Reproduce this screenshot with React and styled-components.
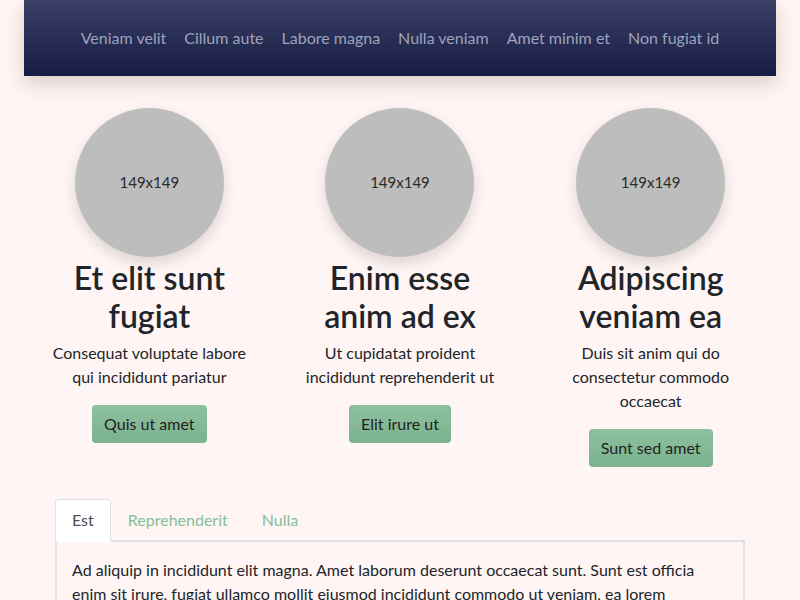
import React from "react";
import styled, { createGlobalStyle } from "styled-components";

const GlobalStyle = createGlobalStyle`
  body {
    margin: 0;
    background: #fff5f4;
    font-family: Lato, "Noto Sans", sans-serif;
    color: #212529;
    font-size: 16px;
    line-height: 1.5;
  }
`;

const Page = styled.div`
  display: flex;
  flex-direction: column;
  align-items: center;
`;

const NavBar = styled.nav`
  width: 752px;
  height: 76px;
  display: flex;
  justify-content: center;
  align-items: center;
  background: linear-gradient(180deg, #3b4066 0%, #171c45 100%);
  box-shadow: 0 8px 18px rgba(60, 30, 20, 0.18);
`;

const NavLink = styled.a`
  padding: 0 9px;
  color: #9ea2bc;
  text-decoration: none;
  font-size: 16px;
`;

const FeatureRow = styled.div`
  width: 752px;
  display: grid;
  grid-template-columns: repeat(3, 1fr);
  margin-top: 32px;
`;

const Feature = styled.div`
  padding: 0 20px;
  display: flex;
  flex-direction: column;
  align-items: center;
  text-align: center;
`;

const Avatar = styled.div`
  width: 149px;
  height: 149px;
  flex-shrink: 0;
  border-radius: 50%;
  background: #bdbdbd;
  box-shadow: 0 6px 14px rgba(0, 0, 0, 0.14);
  display: flex;
  align-items: center;
  justify-content: center;
  font-size: 15px;
  color: #2a2a2a;
  margin-bottom: 2px;
`;

const Title = styled.h2`
  margin: 0 0 5px;
  font-size: 32px;
  font-weight: 600;
  line-height: 1.2;
  color: #212529;
`;

const Text = styled.p`
  margin: 0 0 16px;
  font-size: 16px;
  line-height: 24px;
`;

const GreenButton = styled.button`
  font-family: inherit;
  font-size: 16px;
  line-height: 24px;
  padding: 7px 12px;
  border: none;
  border-radius: 4px;
  color: #222;
  background: linear-gradient(180deg, #8fc09f 0%, #7ab38e 100%);
  cursor: pointer;
`;

const TabsWrap = styled.div`
  width: 690px;
  margin-top: 32px;
`;

const TabList = styled.div`
  display: flex;
  border-bottom: 2px solid #dee2e6;
`;

const Tab = styled.button`
  font-family: inherit;
  font-size: 16px;
  line-height: 24px;
  padding: 8px 16px;
  margin-bottom: -2px;
  border: 1px solid ${(p) => (p.$active ? "#dee2e6" : "transparent")};
  border-bottom: ${(p) => (p.$active ? "2px solid #fff" : "2px solid transparent")};
  border-radius: 4px 4px 0 0;
  background: ${(p) => (p.$active ? "#fff" : "transparent")};
  color: ${(p) => (p.$active ? "#495057" : "#86bf98")};
  cursor: pointer;
`;

const TabPanel = styled.div`
  border: 2px solid #dee2e6;
  border-top: none;
  padding: 16px 15px;
  font-size: 16px;
  line-height: 24px;
`;

const features = [
  {
    title: "Et elit sunt fugiat",
    text: "Consequat voluptate labore qui incididunt pariatur",
    button: "Quis ut amet",
  },
  {
    title: "Enim esse anim ad ex",
    text: "Ut cupidatat proident incididunt reprehenderit ut",
    button: "Elit irure ut",
  },
  {
    title: "Adipiscing veniam ea",
    text: "Duis sit anim qui do consectetur commodo occaecat",
    button: "Sunt sed amet",
  },
];

const links = [
  "Veniam velit",
  "Cillum aute",
  "Labore magna",
  "Nulla veniam",
  "Amet minim et",
  "Non fugiat id",
];

const App = () => {
  return (
    <>
      <GlobalStyle />
      <Page>
        <NavBar>
          {links.map((l) => (
            <NavLink key={l} href="#">
              {l}
            </NavLink>
          ))}
        </NavBar>
        <FeatureRow>
          {features.map((f) => (
            <Feature key={f.title}>
              <Avatar>149x149</Avatar>
              <Title>{f.title}</Title>
              <Text>{f.text}</Text>
              <GreenButton>{f.button}</GreenButton>
            </Feature>
          ))}
        </FeatureRow>
        <TabsWrap>
          <TabList>
            <Tab $active>Est</Tab>
            <Tab>Reprehenderit</Tab>
            <Tab>Nulla</Tab>
          </TabList>
          <TabPanel>
            Ad aliquip in incididunt elit magna. Amet laborum deserunt occaecat
            sunt. Sunt est officia enim sit irure, fugiat ullamco mollit eiusmod
            incididunt commodo ut veniam, ea lorem consectetur. Labore aute
            nostrud dolore do cupidatat proident excepteur minim.
          </TabPanel>
        </TabsWrap>
      </Page>
    </>
  );
};

export default App;
